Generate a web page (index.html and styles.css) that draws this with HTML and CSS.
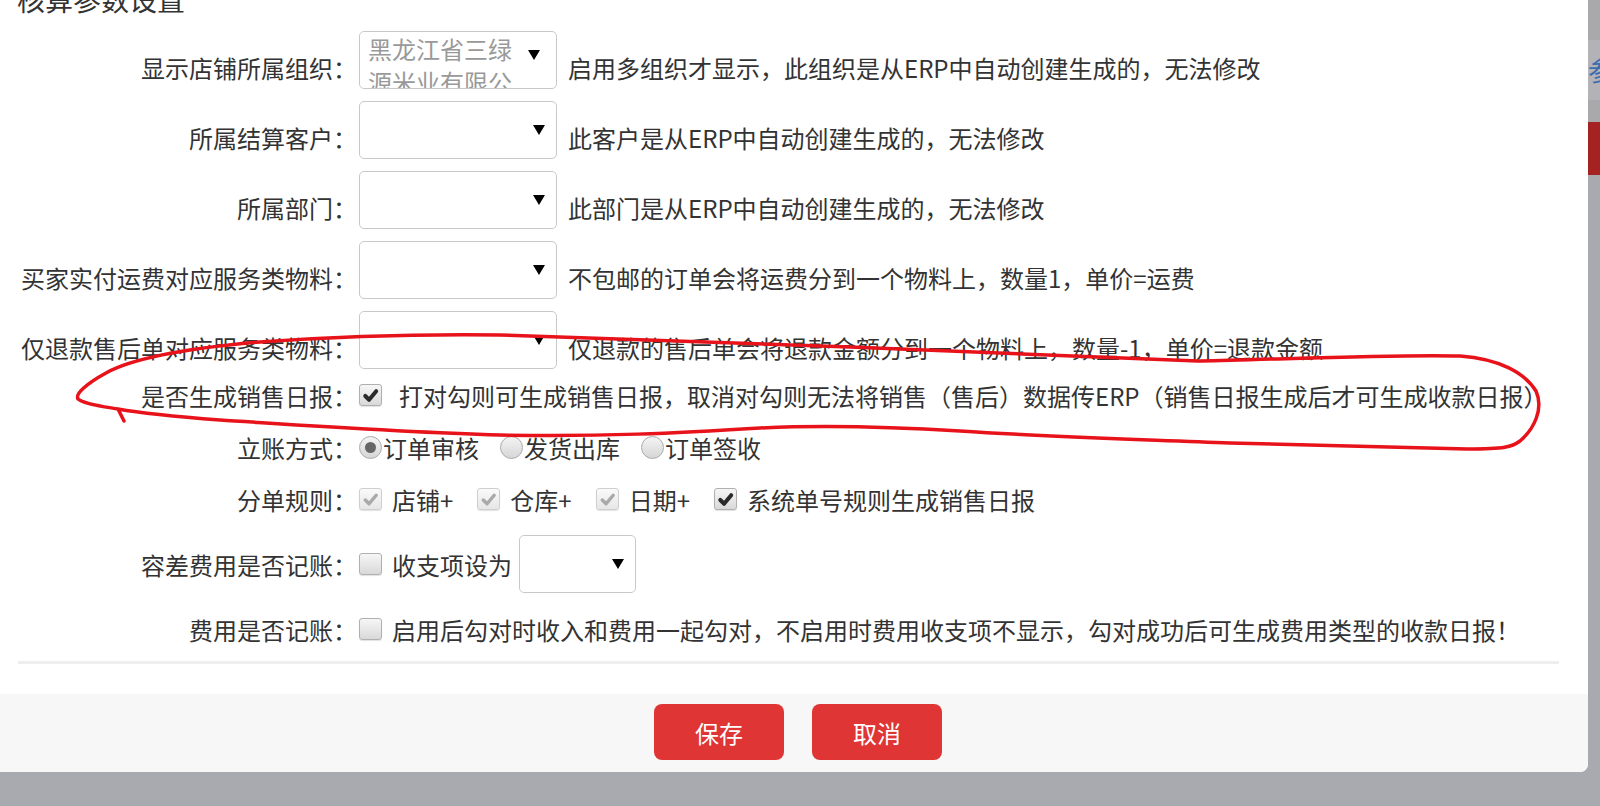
FILE: index.html
```html
<!DOCTYPE html>
<html lang="zh-CN">
<head>
    <meta charset="UTF-8">
    <title>核算参数设置</title>
    <link rel="stylesheet" href="styles.css">
</head>
<body>
    <div class="screen">
        <div class="modal">
            <div class="modal-body">
                <h3 class="title">核算参数设置</h3>

                <div class="row tall field">
                    <label class="row-label">显示店铺所属组织：</label>
                    <div class="select multi">
                        <span class="select-text">黑龙江省三绿源米业有限公司</span>
                        <i class="arrow"></i>
                    </div>
                    <span class="hint">启用多组织才显示，此组织是从ERP中自动创建生成的，无法修改</span>
                </div>

                <div class="row tall field">
                    <label class="row-label">所属结算客户：</label>
                    <div class="select"><span class="select-text"></span><i class="arrow"></i></div>
                    <span class="hint">此客户是从ERP中自动创建生成的，无法修改</span>
                </div>

                <div class="row tall field">
                    <label class="row-label">所属部门：</label>
                    <div class="select"><span class="select-text"></span><i class="arrow"></i></div>
                    <span class="hint">此部门是从ERP中自动创建生成的，无法修改</span>
                </div>

                <div class="row tall field">
                    <label class="row-label">买家实付运费对应服务类物料：</label>
                    <div class="select"><span class="select-text"></span><i class="arrow"></i></div>
                    <span class="hint">不包邮的订单会将运费分到一个物料上，数量1，单价=运费</span>
                </div>

                <div class="row tall field last-tall">
                    <label class="row-label">仅退款售后单对应服务类物料：</label>
                    <div class="select"><span class="select-text"></span><i class="arrow"></i></div>
                    <span class="hint">仅退款的售后单会将退款金额分到一个物料上，数量-1，单价=退款金额</span>
                </div>

                <div class="row short">
                    <label class="row-label">是否生成销售日报：</label>
                    <span class="check checked"><svg viewBox="0 0 20 20"><path d="M4.5 10.5 L8.5 14.5 L16 5.5"/></svg></span>
                    <span class="hint wide">打对勾则可生成销售日报，取消对勾则无法将销售（售后）数据传ERP（销售日报生成后才可生成收款日报）</span>
                </div>

                <div class="row short">
                    <label class="row-label">立账方式：</label>
                    <div class="options radios">
                        <span class="opt"><span class="radio on"></span>订单审核</span>
                        <span class="opt"><span class="radio"></span>发货出库</span>
                        <span class="opt"><span class="radio"></span>订单签收</span>
                    </div>
                </div>

                <div class="row short gap-after">
                    <label class="row-label">分单规则：</label>
                    <div class="options">
                        <span class="opt"><span class="check checked disabled"><svg viewBox="0 0 20 20"><path d="M4.5 10.5 L8.5 14.5 L16 5.5"/></svg></span>店铺+</span>
                        <span class="opt"><span class="check checked disabled"><svg viewBox="0 0 20 20"><path d="M4.5 10.5 L8.5 14.5 L16 5.5"/></svg></span>仓库+</span>
                        <span class="opt"><span class="check checked disabled"><svg viewBox="0 0 20 20"><path d="M4.5 10.5 L8.5 14.5 L16 5.5"/></svg></span>日期+</span>
                        <span class="opt"><span class="check checked"><svg viewBox="0 0 20 20"><path d="M4.5 10.5 L8.5 14.5 L16 5.5"/></svg></span>系统单号规则生成销售日报</span>
                    </div>
                </div>

                <div class="row tall gap-after">
                    <label class="row-label">容差费用是否记账：</label>
                    <span class="opt"><span class="check"></span>收支项设为</span>
                    <div class="select small"><span class="select-text"></span><i class="arrow"></i></div>
                </div>

                <div class="row short">
                    <label class="row-label">费用是否记账：</label>
                    <span class="opt"><span class="check"></span>启用后勾对时收入和费用一起勾对，不启用时费用收支项不显示，勾对成功后可生成费用类型的收款日报！</span>
                </div>

                <div class="divider"></div>
            </div>

            <div class="modal-footer">
                <button class="btn">保存</button>
                <button class="btn">取消</button>
            </div>
        </div>

        <!-- page behind the dialog -->
        <div class="side">
            <div class="side-a"></div>
            <div class="side-b">参</div>
            <div class="side-a short-a"></div>
            <div class="side-red"></div>
        </div>
    </div>

    <!-- hand drawn mark on the screenshot -->
    <svg class="markup" viewBox="0 0 1600 806" width="1600" height="806">
        <path d="M124 421 L118 409 C100 406 84 404 78 399 C75 394 86 384 106 373 C135 357 190 348 260 342 C330 337 420 334 500 335 C600 338 714 343 850 347 C960 351 1080 357 1200 361 C1290 359 1400 354 1460 356 C1500 359 1525 373 1536 391 C1544 409 1534 429 1520 441 C1512 447 1505 449 1467 449 C1400 448 1333 446 1230 443 C1130 439 1050 437 960 431 C880 426 820 425 760 428 C680 433 600 437 500 435 C400 432 300 425 220 420 C180 417 140 413 118 409"/>
    </svg>
</body>
</html>
```

FILE: styles.css
```css
* {
    margin: 0;
    padding: 0;
    box-sizing: border-box;
}

body {
    width: 1600px;
    height: 806px;
    overflow: hidden;
    position: relative;
    background-color: #a9aab0;
    font-family: "Noto Sans CJK SC", "Liberation Sans", sans-serif;
    font-size: 24px;
    color: #333;
}

.screen {
    display: flex;
    height: 772px;
}

/* Dialog */
.modal {
    width: 1588px;
    height: 772px;
    background-color: #fff;
    border-bottom-right-radius: 8px;
    display: flex;
    flex-direction: column;
    overflow: hidden;
}

.modal-body {
    flex: 1;
}

.title {
    font-size: 28px;
    font-weight: normal;
    line-height: 40px;
    margin: -21px 0 12px 17px;
    color: #333;
}

.row {
    display: flex;
    align-items: center;
    white-space: nowrap;
}

.row.tall {
    height: 58px;
    margin-bottom: 12px;
}

.row.last-tall {
    margin-bottom: 6px;
}

.row.short {
    height: 40px;
    margin-bottom: 12px;
}

.row.gap-after {
    margin-bottom: 16px;
}

/* labels sit a bit under the middle of the select box */
.row.field .row-label,
.row.field .hint {
    padding-top: 14px;
}

.row-label {
    width: 357px;
    flex-shrink: 0;
    text-align: right;
    margin-right: 2px;
}

/* Fake select */
.select {
    width: 198px;
    height: 58px;
    border: 1px solid #c9c9c9;
    border-radius: 5px;
    background-color: #fff;
    display: flex;
    align-items: center;
    padding: 0 11px 0 8px;
    flex-shrink: 0;
    overflow: hidden;
}

.select.small {
    width: 117px;
    margin-left: 7px;
}

.select-text {
    flex: 1;
    color: #999;
    white-space: normal;
    line-height: 33px;
    overflow: hidden;
}

.select.multi {
    align-items: flex-start;
}

.select.multi .select-text {
    height: 56px;
    max-width: 160px;
}

.select.multi .arrow {
    margin-top: 18px;
}

.arrow {
    width: 0;
    height: 0;
    border-left: 6px solid transparent;
    border-right: 6px solid transparent;
    border-top: 10px solid #000;
}

.hint {
    margin-left: 11px;
}

.hint.wide {
    margin-left: 17px;
}

/* Checkboxes and radios */
.check {
    width: 23px;
    height: 22px;
    border: 1px solid #b0b0b0;
    border-radius: 3px;
    background: linear-gradient(#f6f6f6, #d9d9d9);
    box-shadow: 0 1px 1px rgba(0, 0, 0, 0.12);
    display: inline-flex;
    align-items: center;
    justify-content: center;
    flex-shrink: 0;
}

.check svg {
    width: 19px;
    height: 19px;
}

.check svg path {
    fill: none;
    stroke: #2a2a2a;
    stroke-width: 4.2;
    stroke-linecap: round;
    stroke-linejoin: round;
}

.check.disabled {
    background: linear-gradient(#fafafa, #e6e6e6);
    border-color: #cfcfcf;
}

.check.disabled svg path {
    stroke: #a9a9a9;
    stroke-width: 3.6;
}

.options {
    display: flex;
    align-items: center;
    gap: 24px;
}

.options.radios {
    gap: 21px;
}

.opt {
    display: inline-flex;
    align-items: center;
    gap: 10px;
}

.radios .opt {
    gap: 1px;
}

.radio {
    width: 23px;
    height: 23px;
    border-radius: 50%;
    border: 1px solid #aaa;
    background: linear-gradient(#f4f4f4, #d6d6d6);
    display: inline-flex;
    align-items: center;
    justify-content: center;
}

.radio.on::after {
    content: "";
    width: 11px;
    height: 11px;
    border-radius: 50%;
    background-color: #666;
}

.divider {
    height: 3px;
    background-color: #eeeeee;
    margin: 8px 29px 0 18px;
}

/* Footer */
.modal-footer {
    height: 78px;
    background-color: #f7f7f7;
    display: flex;
    justify-content: center;
    align-items: flex-start;
    gap: 28px;
    padding-top: 10px;
    padding-left: 8px;
}

.btn {
    width: 130px;
    height: 56px;
    border: none;
    border-radius: 8px;
    background-color: #e03535;
    color: #fff;
    font-family: inherit;
    font-size: 24px;
    cursor: pointer;
}

/* Right strip of the page below */
.side {
    flex: 1;
    display: flex;
    flex-direction: column;
    overflow: hidden;
}

.side-a {
    height: 40px;
    background-color: #a9a9ac;
}

.side-a.short-a {
    height: 22px;
}

.side-b {
    height: 60px;
    background-color: #b3b3b7;
    color: #3a6db0;
    font-size: 26px;
    line-height: 60px;
    white-space: nowrap;
}

.side-red {
    height: 53px;
    background-color: #a52222;
}

/* Annotation */
.markup {
    position: absolute;
    top: 0;
    left: 0;
    pointer-events: none;
}

.markup path {
    fill: none;
    stroke: #e8121a;
    stroke-width: 3.5;
    stroke-linecap: round;
    stroke-linejoin: round;
}
```
